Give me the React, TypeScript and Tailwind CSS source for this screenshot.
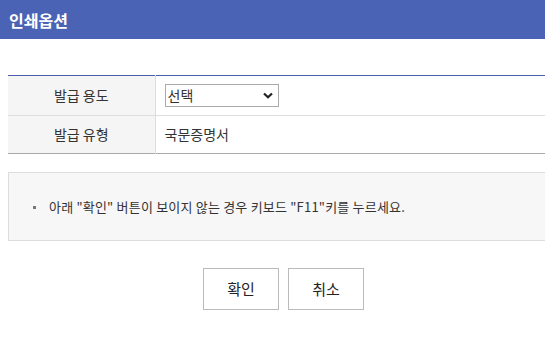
import React from 'react';

const FONT = "font-['Noto_Sans_CJK_KR','Noto_Sans',sans-serif]";

export default function App() {
  return (
    <div className={`w-[545px] h-[337px] overflow-hidden bg-white text-[#333] ${FONT}`}>
      {/* Header */}
      <div className="h-[39px] bg-[#4a63b4] flex items-center pl-[9px]">
        <h1 className="text-[16px] font-bold text-white leading-none">인쇄옵션</h1>
      </div>

      <div className="pl-2 w-[580px]">
        {/* Options table */}
        <table className="mt-[36px] w-full border-collapse border-t border-t-[#4b5fa8] border-b border-b-[#a9a9a9] text-[14px]">
          <tbody>
            <tr className="h-[40px] border-b border-[#dddddd]">
              <th className="w-[147px] bg-[#f5f5f5] border-r border-[#dddddd] font-normal text-center">
                발급 용도
              </th>
              <td className="pl-[9px]">
                <div className="relative w-[114px] h-[23px]">
                  <select className="appearance-none w-full h-full border border-[#aaaaaa] bg-white pl-[2px] py-0 text-[14px] leading-[21px] outline-none">
                    <option>선택</option>
                  </select>
                  <svg
                    className="absolute right-[6px] top-[8px] pointer-events-none"
                    width="10"
                    height="7"
                    viewBox="0 0 10 7"
                  >
                    <path d="M1 1.5 L5 5.2 L9 1.5" fill="none" stroke="#222" strokeWidth="2.2" />
                  </svg>
                </div>
              </td>
            </tr>
            <tr className="h-[38px]">
              <th className="bg-[#f5f5f5] border-r border-[#dddddd] font-normal text-center">
                발급 유형
              </th>
              <td className="pl-[9px]">국문증명서</td>
            </tr>
          </tbody>
        </table>

        {/* Notice */}
        <div className="mt-[18px] h-[69px] bg-[#f7f7f7] border border-[#dddddd] flex items-center pl-[24px] text-[13px]">
          <span className="w-[3px] h-[3px] bg-[#777] mr-[13px] mt-[1px]" />
          <p className="tracking-[0.2px]">아래 "확인" 버튼이 보이지 않는 경우 키보드 "F11"키를 누르세요.</p>
        </div>
      </div>

      {/* Buttons */}
      <div className="mt-[27px] flex justify-center gap-[9px] pl-[22px]">
        <button className="w-[76px] h-[42px] border border-[#bbbbbb] bg-white text-[15px] text-[#222]">
          확인
        </button>
        <button className="w-[76px] h-[42px] border border-[#bbbbbb] bg-white text-[15px] text-[#222]">
          취소
        </button>
      </div>
    </div>
  );
}
